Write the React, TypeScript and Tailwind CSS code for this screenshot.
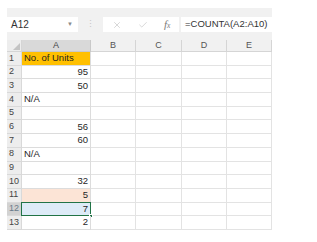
import React from 'react';
import { Check, X } from 'lucide-react';

type Cell = { v: string; align?: 'left' | 'right' };

const rows: { n: number; a: Cell; fill?: string }[] = [
  { n: 1, a: { v: 'No. of Units', align: 'left' }, fill: 'bg-[#ffc000]' },
  { n: 2, a: { v: '95' } },
  { n: 3, a: { v: '50' } },
  { n: 4, a: { v: 'N/A', align: 'left' } },
  { n: 5, a: { v: '' } },
  { n: 6, a: { v: '56' } },
  { n: 7, a: { v: '60' } },
  { n: 8, a: { v: 'N/A', align: 'left' } },
  { n: 9, a: { v: '' } },
  { n: 10, a: { v: '32' } },
  { n: 11, a: { v: '5' }, fill: 'bg-[#fce4d6]' },
  { n: 12, a: { v: '7' }, fill: 'bg-[#ddebf7]' },
  { n: 13, a: { v: '2' } },
];

const cols = ['B', 'C', 'D', 'E'];

const App: React.FC = () => {
  return (
    <div className="w-[317px] h-[242px] bg-white pl-[7px] pt-[8px] font-['Liberation_Sans',Arial,sans-serif] text-[9.5px] text-[#1f1f1f]">
      <div className="w-[265px]">
        {/* formula bar */}
        <div className="h-[32px] bg-[#f1f1f1] flex items-start pt-[9px] gap-[2px]">
          <div className="w-[71px] h-[15px] bg-white flex items-center justify-between pl-[4px] pr-[5px]">
            <span className="text-[#333] text-[10px]">A12</span>
            <span className="text-[6px] text-[#8a8a8a]">▼</span>
          </div>
          <div className="w-[21px] h-[15px] flex items-center justify-center text-[#c6c6c6] text-[9px]">⋮</div>
          <div className="w-[76px] h-[15px] bg-white flex items-center pl-[9px]">
            <X size={10} strokeWidth={1.2} className="text-[#b0b0b0]" />
            <Check size={10} strokeWidth={1.2} className="text-[#b0b0b0] ml-[16px]" />
            <span className="ml-[16px] text-[#7a7a7a] italic font-['Liberation_Serif',serif] text-[11px] leading-none">
              f<span className="text-[7.5px]">x</span>
            </span>
          </div>
          <div className="flex-1 h-[15px] bg-white flex items-center pl-[4px] text-[#333] text-[9.5px]">=COUNTA(A2:A10)</div>
        </div>

        {/* sheet */}
        <div className="grid grid-cols-[15px_69px_45px_46px_45px_45px]">
          {/* header row */}
          <div className="h-[12px] bg-[#ededed] border-r border-b border-[#d5d5d5] relative">
            <div className="absolute right-[1px] bottom-[1px] w-0 h-0 border-l-[7px] border-l-transparent border-b-[7px] border-b-[#c3c3c3]" />
          </div>
          <div className="h-[12px] bg-[#d9d9d9] border-r border-b border-[#c9c9c9] flex items-center justify-center text-[#444] text-[9px]">A</div>
          {cols.map((c) => (
            <div key={c} className="h-[12px] bg-[#f1f1f1] border-r border-b border-[#d5d5d5] flex items-center justify-center text-[#555] text-[9px]">
              {c}
            </div>
          ))}

          {rows.map((r) => (
            <React.Fragment key={r.n}>
              <div
                className={`h-[13.7px] border-r border-b border-[#d9d9d9] flex items-center pl-[2px] text-[9px] ${
                  r.n === 12 ? 'bg-[#d2d2d2] text-[#6a7a8a]' : 'bg-[#ededed] text-[#444]'
                }`}
              >
                {r.n}
              </div>
              <div
                className={`h-[13.7px] border-r border-b border-[#dcdcdc] flex items-center px-[2px] relative ${r.fill ?? 'bg-white'} ${
                  r.a.align === 'left' ? 'justify-start' : 'justify-end'
                }`}
              >
                {r.a.v}
                {r.n === 12 && (
                  <>
                    <div className="absolute -left-[1px] -top-[1px] -right-[1px] -bottom-[1px] border-[1.5px] border-[#217346]" />
                    <div className="absolute -right-[2.5px] -bottom-[2.5px] w-[4px] h-[4px] bg-[#217346] border border-white" />
                  </>
                )}
              </div>
              {cols.map((c) => (
                <div key={c} className="h-[13.7px] border-r border-b border-[#e3e3e3] bg-white" />
              ))}
            </React.Fragment>
          ))}
        </div>
      </div>
    </div>
  );
};

export default App;
